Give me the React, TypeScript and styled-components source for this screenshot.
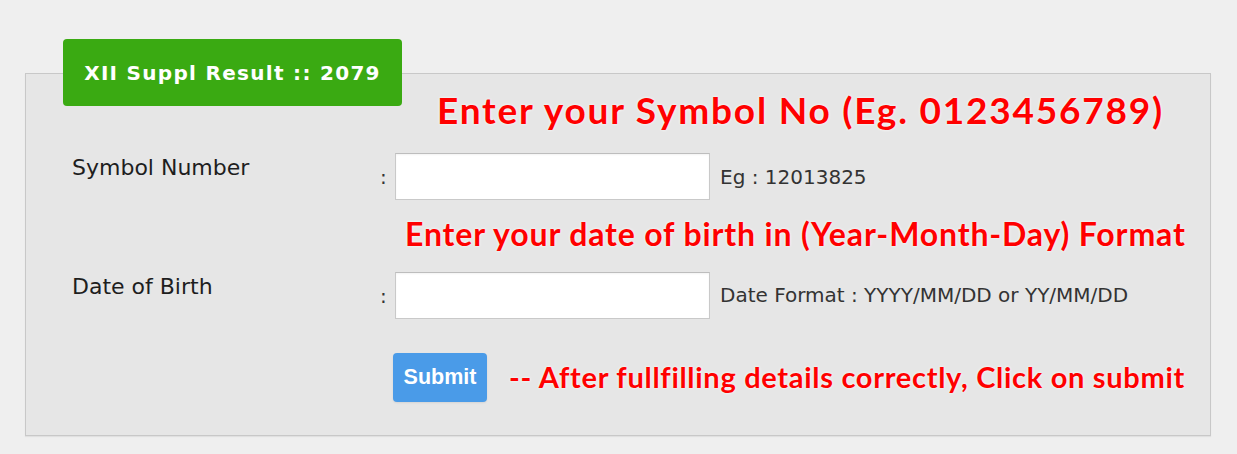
import styled, { createGlobalStyle } from "styled-components";

const GlobalStyle = createGlobalStyle`
  html, body {
    margin: 0;
    padding: 0;
    background-color: #efefef;
  }
  body {
    font-family: "DejaVu Sans", Verdana, sans-serif;
    color: #222;
  }
`;

const Page = styled.div`
  width: 1237px;
  height: 454px;
  padding: 73px 0 0 25px;
  box-sizing: border-box;
`;

const Panel = styled.div`
  width: 1186px;
  height: 363px;
  box-sizing: border-box;
  border: 1px solid #c8c8c8;
  background-color: #e6e6e6;
  box-shadow: 0 1px 1px rgba(0, 0, 0, 0.06);
`;

const Header = styled.div`
  display: flex;
  align-items: flex-start;
`;

const Badge = styled.div`
  margin: -35px 0 0 37px;
  width: 339px;
  height: 67px;
  display: flex;
  align-items: center;
  justify-content: center;
  background-color: #3aaa12;
  border-radius: 4px;
  color: #fff;
  font-family: "DejaVu Sans", Verdana, sans-serif;
  font-weight: bold;
  font-size: 20px;
  letter-spacing: 1.3px;
`;

const Notice = styled.div<{ $size: number; $spacing: number; $left: number; $top?: number }>`
  margin-left: ${(p) => p.$left}px;
  margin-top: ${(p) => p.$top ?? 0}px;
  font-family: Lato, "Open Sans", sans-serif;
  font-weight: bold;
  font-size: ${(p) => p.$size}px;
  letter-spacing: ${(p) => p.$spacing}px;
  line-height: 1.2;
  color: #ff0000;
  white-space: nowrap;
  text-shadow: 0 0 3px #fff;
`;

const FieldRow = styled.div<{ $top: number }>`
  display: grid;
  grid-template-columns: 308px 15px 315px auto;
  align-items: center;
  margin-top: ${(p) => p.$top}px;
  padding-left: 46px;
`;

const Label = styled.label`
  align-self: start;
  margin-top: 2px;
  font-size: 22px;
  line-height: 1.2;
  color: #1e1e1e;
`;

const Colon = styled.span`
  font-size: 20px;
  color: #333;
  padding-top: 1px;
`;

const TextInput = styled.input`
  width: 315px;
  height: 47px;
  box-sizing: border-box;
  margin: 0;
  border: 1px solid #c9c9c9;
  border-top-color: #bdbdbd;
  background-color: #fff;
  box-shadow: inset 0 1px 2px rgba(0, 0, 0, 0.05);
  font-size: 18px;
  padding: 0 10px;
`;

const Hint = styled.span`
  margin-left: 10px;
  font-size: 20px;
  color: #333;
  white-space: nowrap;
`;

const ActionRow = styled.div`
  display: flex;
  align-items: center;
  margin-top: 34px;
  padding-left: 367px;
`;

const SubmitButton = styled.button`
  width: 94px;
  height: 49px;
  border: none;
  border-radius: 4px;
  background-color: #4a9be8;
  color: #fff;
  font-family: "Liberation Sans", Arial, sans-serif;
  font-weight: bold;
  font-size: 21.5px;
  box-shadow: 0 1px 2px rgba(0, 0, 0, 0.08);
  cursor: pointer;
`;

export default function App() {
  return (
    <>
      <GlobalStyle />
      <Page>
        <Panel>
          <Header>
            <Badge>XII Suppl Result :: 2079</Badge>
            <Notice $size={37} $spacing={1.8} $left={35} $top={14}>
              Enter your Symbol No (Eg. 0123456789)
            </Notice>
          </Header>
          <FieldRow $top={21}>
            <Label>Symbol Number</Label>
            <Colon>:</Colon>
            <TextInput type="text" />
            <Hint>Eg : 12013825</Hint>
          </FieldRow>
          <Notice $size={32} $spacing={0.85} $left={379} $top={15}>
            Enter your date of birth in (Year-Month-Day) Format
          </Notice>
          <FieldRow $top={18}>
            <Label>Date of Birth</Label>
            <Colon>:</Colon>
            <TextInput type="text" />
            <Hint>Date Format : YYYY/MM/DD or YY/MM/DD</Hint>
          </FieldRow>
          <ActionRow>
            <SubmitButton type="button">Submit</SubmitButton>
            <Notice $size={29} $spacing={0.7} $left={22}>
              -- After fullfilling details correctly, Click on submit
            </Notice>
          </ActionRow>
        </Panel>
      </Page>
    </>
  );
}
